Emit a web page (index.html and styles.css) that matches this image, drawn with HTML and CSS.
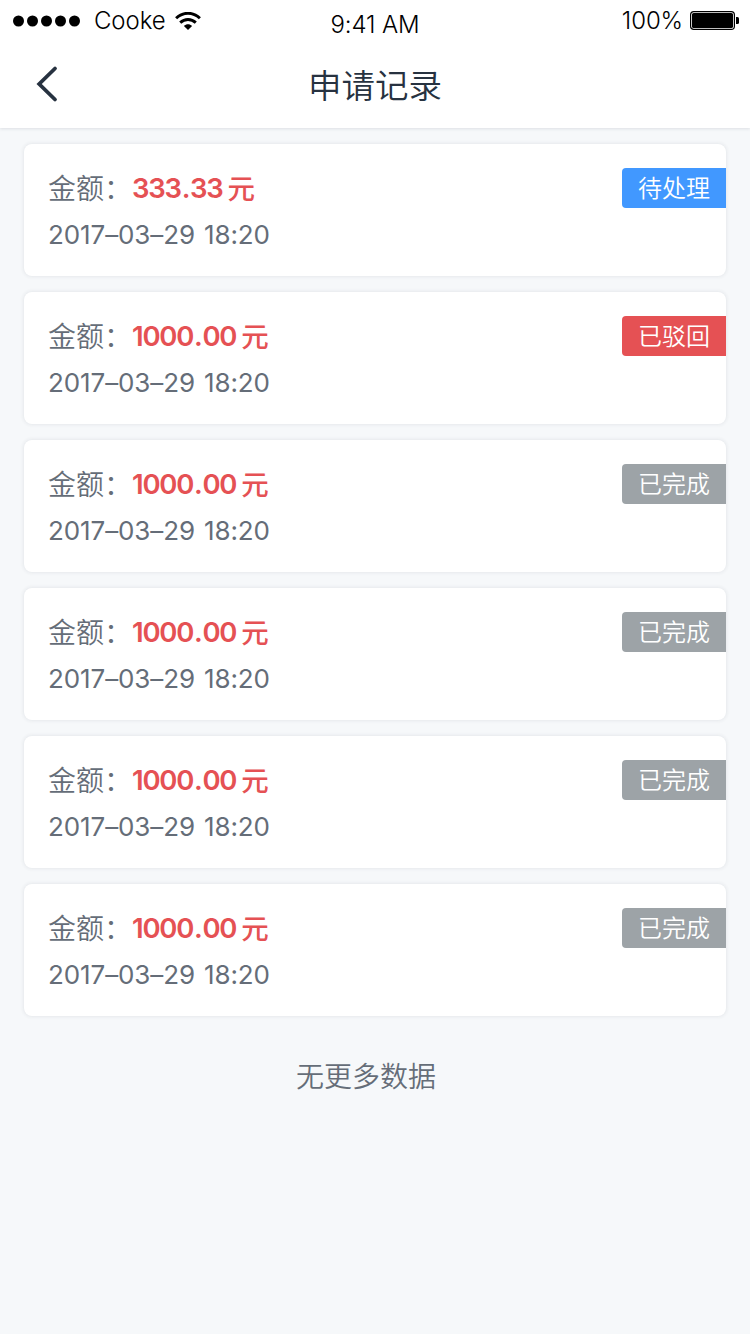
FILE: index.html
```html
<!DOCTYPE html>
<html lang="zh-CN">
<head>
<meta charset="utf-8">
<title>申请记录</title>
<link rel="stylesheet" href="styles.css">
</head>
<body>
<header class="header">
  <div class="status">
    <div class="status-left">
      <svg class="signal" width="68" height="12" viewBox="0 0 68 12"><circle cx="5.5" cy="6" r="5.5"/><circle cx="19.5" cy="6" r="5.5"/><circle cx="33.5" cy="6" r="5.5"/><circle cx="47.5" cy="6" r="5.5"/><circle cx="61.5" cy="6" r="5.5"/></svg>
      <span class="carrier">Cooke</span>
      <svg class="wifi" width="26" height="18" viewBox="0 0 26 18"><path d="M1.1 6.2C8 -.4 18 -.4 24.9 6.2M5.2 10.6C9.7 6.4 16.3 6.4 20.8 10.6" fill="none" stroke="#000" stroke-width="2.9"/><path d="M8.9 13.9C11.3 11.6 14.7 11.6 17.1 13.9L13 17.9Z"/></svg>
    </div>
    <span class="clock">9:41 AM</span>
    <div class="status-right">
      <span class="percent">100%</span>
      <svg class="battery" width="49" height="19" viewBox="0 0 49 19"><rect x=".6" y=".6" width="43.8" height="17.8" rx="3.2" fill="none" stroke="#000" stroke-width="1.2"/><rect x="2" y="2" width="41" height="15" rx="1.6"/><path d="M46 6h1.5q1.5 0 1.5 1.5v4q0 1.5-1.5 1.5H46z"/></svg>
    </div>
  </div>
  <nav class="navbar">
    <svg class="back" width="24" height="38" viewBox="0 0 24 38"><path d="M20 3.5L4.2 19L20 34.5" fill="none" stroke="#273240" stroke-width="3.8" stroke-linecap="round" stroke-linejoin="miter"/></svg>
    <h1 class="title">申请记录</h1>
  </nav>
</header>
<main class="list">
  <article class="card">
    <div class="info"><p class="amount"><span class="label">金额：</span><b class="number">333<span class="dot">.</span>33</b><b class="unit">元</b></p><time class="date">2017–03–29 18:20</time></div>
    <span class="tag pending">待处理</span>
  </article>
  <article class="card">
    <div class="info"><p class="amount"><span class="label">金额：</span><b class="number">1000<span class="dot">.</span>00</b><b class="unit">元</b></p><time class="date">2017–03–29 18:20</time></div>
    <span class="tag rejected">已驳回</span>
  </article>
  <article class="card">
    <div class="info"><p class="amount"><span class="label">金额：</span><b class="number">1000<span class="dot">.</span>00</b><b class="unit">元</b></p><time class="date">2017–03–29 18:20</time></div>
    <span class="tag">已完成</span>
  </article>
  <article class="card">
    <div class="info"><p class="amount"><span class="label">金额：</span><b class="number">1000<span class="dot">.</span>00</b><b class="unit">元</b></p><time class="date">2017–03–29 18:20</time></div>
    <span class="tag">已完成</span>
  </article>
  <article class="card">
    <div class="info"><p class="amount"><span class="label">金额：</span><b class="number">1000<span class="dot">.</span>00</b><b class="unit">元</b></p><time class="date">2017–03–29 18:20</time></div>
    <span class="tag">已完成</span>
  </article>
  <article class="card">
    <div class="info"><p class="amount"><span class="label">金额：</span><b class="number">1000<span class="dot">.</span>00</b><b class="unit">元</b></p><time class="date">2017–03–29 18:20</time></div>
    <span class="tag">已完成</span>
  </article>
</main>
<footer class="no-more">无更多数据</footer>
</body>
</html>
```
FILE: styles.css
```css
* { box-sizing: border-box; margin: 0; padding: 0; }
body {
  width: 750px;
  min-height: 1334px;
  background: #f6f8fa;
  color: #656d78;
  font-family: Inter, "Noto Sans CJK SC", sans-serif;
}
svg { display: block; flex: none; }
.header {
  height: 128px;
  background: #fff;
  box-shadow: 0 1px 3px rgba(39, 50, 64, .12);
}
.status {
  display: grid;
  grid-template-columns: 1fr auto 1fr;
  height: 40px;
  padding: 0 11px 0 13px;
  color: #000;
  font-size: 24px;
  line-height: 40px;
  white-space: nowrap;
}
.status-left, .status-right { display: flex; align-items: center; height: 41px; }
.status-right { justify-content: flex-end; }
.carrier { width: 72px; margin-left: 13px; letter-spacing: -.1px; font-weight: 300; }
.wifi { margin-left: 9px; }
.clock { padding-top: 5px; margin-left: -2px; letter-spacing: -.1px; font-weight: 300; }
.percent { margin-right: 7px; letter-spacing: -.1px; font-weight: 300; }
.navbar {
  display: grid;
  grid-template-columns: 60px 1fr 60px;
  align-items: center;
  height: 88px;
}
.back { margin-left: 35px; }
.title {
  padding-bottom: 1px;
  color: #273240;
  font-size: 33.5px;
  font-family: "Noto Sans CJK SC", sans-serif;
  font-weight: 350;
  line-height: 48px;
  text-align: center;
}
.list {
  display: grid;
  gap: 16px;
  padding: 16px 24px 0;
}
.card {
  display: flex;
  align-items: flex-start;
  justify-content: space-between;
  height: 132px;
  padding: 24px 0 0 24px;
  border-radius: 8px;
  background: #fff;
  box-shadow: 0 0 4px rgba(39, 50, 64, .12);
}
.amount {
  display: flex;
  align-items: flex-start;
  height: 40px;
  font-size: 28px;
  line-height: 40px;
}
.label { width: 84px; padding-top: 1px; font-weight: 350; white-space: nowrap; }
.number { color: #e55154; font-size: 27.5px; font-weight: 600; letter-spacing: -1.25px; }
.dot { margin: 0 .8px 0 1px; }
.unit { margin-left: 5px; padding-top: 1px; color: #e55154; font-size: 27.5px; font-weight: 500; }
.date {
  display: block;
  margin-top: 8px;
  font-size: 26px;
  font-weight: 400;
  line-height: 38px;
  letter-spacing: -.1px;
  word-spacing: 1.8px;
}
.tag {
  width: 104px;
  height: 40px;
  padding: 1px 0 0 16px;
  border-radius: 4px 0 0 4px;
  background: #9da3a7;
  color: #fff;
  font-size: 24px;
  font-weight: 350;
  line-height: 39px;
}
.pending { background: #4198ff; }
.rejected { background: #e55154; }
.no-more {
  margin-top: 41px;
  padding-right: 18px;
  font-size: 28px;
  font-weight: 350;
  line-height: 40px;
  text-align: center;
}
```
